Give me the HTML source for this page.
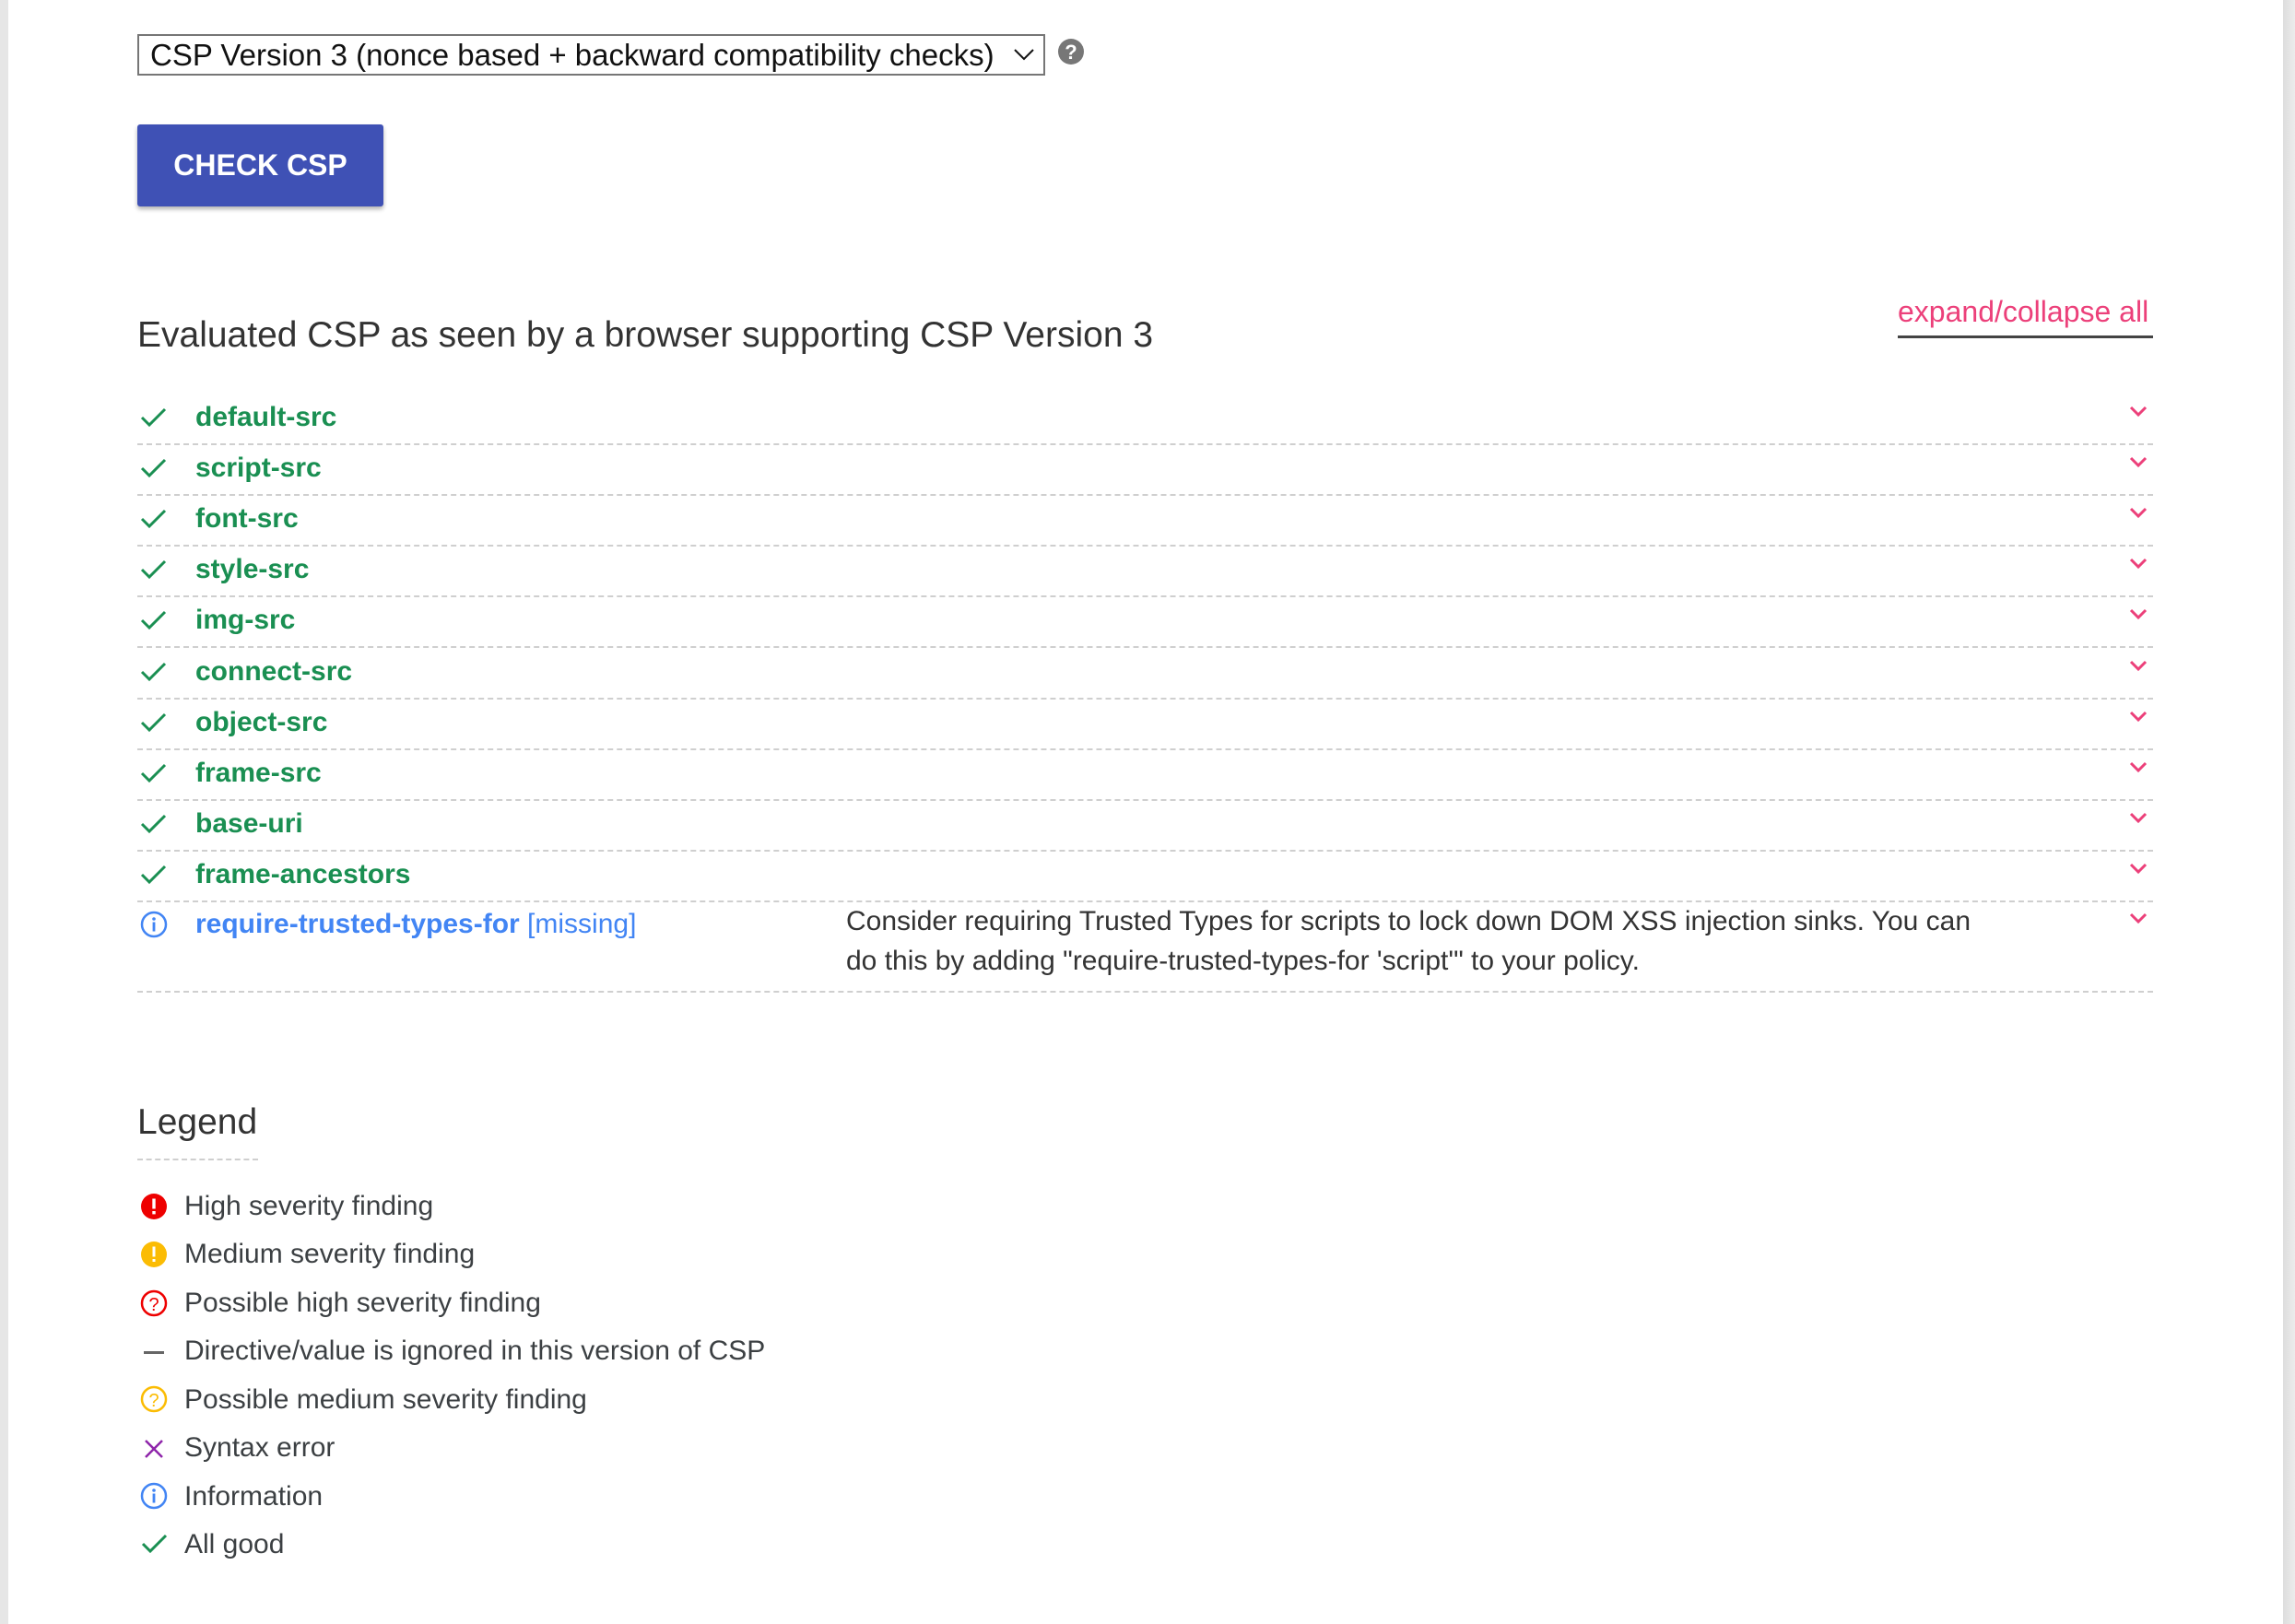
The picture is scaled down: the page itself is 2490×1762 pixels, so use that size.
<!DOCTYPE html>
<html><head><meta charset="utf-8"><style>
html,body{margin:0;padding:0;background:#fff;}
body{width:2490px;height:1762px;position:relative;overflow:hidden;font-family:"Liberation Sans",Arial,sans-serif;color:#3c4043;}
.lb{position:absolute;left:0;top:0;width:9px;height:1762px;background:#e6e6e6;}
.rb{position:absolute;left:2477px;top:0;width:13px;height:1762px;background:linear-gradient(90deg,#ddd,#ececec);}
.a{position:absolute;white-space:nowrap;}
.sel{position:absolute;left:149px;top:37px;width:981px;height:41px;border:2px solid #767676;background:#fff;}
.sel span{position:absolute;left:12px;top:2px;font-size:33px;line-height:37px;color:#111;}
.btn{position:absolute;left:149px;top:135px;width:267px;height:89px;background:#3f51b5;border-radius:3px;box-shadow:0 3px 5px rgba(0,0,0,.3);color:#fff;font-size:32px;font-weight:bold;line-height:89px;text-align:center;}
.row{position:absolute;left:149px;width:2187px;height:55px;}
.sep{position:absolute;left:149px;width:2187px;border-top:2px dashed #cfcfcf;height:0;}
.lbl{position:absolute;left:63px;font-size:30px;font-weight:bold;color:#1a8f52;line-height:40px;top:-20px;}
.leg{position:absolute;left:200px;font-size:30px;line-height:36px;color:#3c4043;}
</style></head><body>
<div class="lb"></div><div class="rb"></div>
<div class="sel"><span>CSP Version 3 (nonce based + backward compatibility checks)</span>
<svg style="position:absolute;left:948px;top:12px" width="24" height="16" viewBox="0 0 24 16"><path d="M2 3 L12 13 L22 3" fill="none" stroke="#111" stroke-width="2"/></svg></div>
<svg style="position:absolute;left:1148px;top:42px" width="28" height="28" viewBox="0 0 28 28"><circle cx="14" cy="14" r="14" fill="#777"/><text x="14" y="22" text-anchor="middle" font-family="Liberation Sans" font-weight="bold" font-size="22" fill="#fff">?</text></svg>
<div class="btn">CHECK CSP</div>
<div class="a" style="left:149px;top:340px;font-size:39px;line-height:48px;color:#333;">Evaluated CSP as seen by a browser supporting CSP Version 3</div>
<div class="a" style="left:2059px;top:318px;font-size:32px;line-height:40px;color:#ec407a;">expand/collapse all</div>
<div class="a" style="left:2059px;top:364px;width:277px;height:3px;background:#444;"></div>

<div id="rows"></div>
<script>
var names=["default-src","script-src","font-src","style-src","img-src","connect-src","object-src","frame-src","base-uri","frame-ancestors"];
var h="";
for(var i=0;i<names.length;i++){
 var cy=453+i*55.1;
 h+='<div class="row" style="top:'+cy+'px"><svg style="position:absolute;left:3px;top:-12px" width="30" height="24" viewBox="0 0 30 24"><path d="M2 12 L10 20 L27 3" fill="none" stroke="#1a8f52" stroke-width="3"/></svg><div class="lbl">'+names[i]+'</div><svg style="position:absolute;left:2161px;top:-14px" width="20" height="14" viewBox="0 0 20 14"><path d="M2 3 L10 11 L18 3" fill="none" stroke="#ec407a" stroke-width="3"/></svg></div>';
 h+='<div class="sep" style="top:'+(481+i*55.1)+'px"></div>';
}
document.getElementById("rows").innerHTML=h;
</script>
<div class="row" style="top:1003px">
<svg style="position:absolute;left:3px;top:-15px" width="30" height="30" viewBox="0 0 30 30"><circle cx="15" cy="15" r="13" fill="none" stroke="#4285f4" stroke-width="2.5"/><circle cx="15" cy="9" r="1.8" fill="#4285f4"/><rect x="13.6" y="12.5" width="2.8" height="10" fill="#4285f4"/></svg>
<div class="a" style="left:63px;top:-20px;font-size:30px;line-height:40px;color:#4285f4;"><b>require-trusted-types-for</b> [missing]</div>
<svg style="position:absolute;left:2161px;top:-14px" width="20" height="14" viewBox="0 0 20 14"><path d="M2 3 L10 11 L18 3" fill="none" stroke="#ec407a" stroke-width="3"/></svg>
</div>
<div class="a" style="left:918px;top:978px;font-size:30px;line-height:43px;color:#333;">Consider requiring Trusted Types for scripts to lock down DOM XSS injection sinks. You can<br>do this by adding "require-trusted-types-for 'script'" to your policy.</div>
<div class="sep" style="top:1075px"></div>

<div class="a" style="left:149px;top:1194px;font-size:39px;line-height:48px;color:#333;">Legend</div>
<div class="a" style="left:149px;top:1257px;width:131px;border-top:2px dashed #cfcfcf;"></div>

<svg style="position:absolute;left:152px;top:1294px" width="30" height="30" viewBox="0 0 30 30"><circle cx="15" cy="15" r="14" fill="#e00"/><rect x="13.3" y="6.5" width="3.4" height="11" fill="#fff"/><rect x="13.3" y="20" width="3.4" height="3.4" fill="#fff"/></svg>
<div class="leg" style="top:1291px">High severity finding</div>
<svg style="position:absolute;left:152px;top:1346px" width="30" height="30" viewBox="0 0 30 30"><circle cx="15" cy="15" r="14" fill="#fbbc04"/><rect x="13.5" y="6.5" width="3" height="11" fill="#fff"/><rect x="13.5" y="20" width="3" height="3" fill="#fff"/></svg>
<div class="leg" style="top:1343px">Medium severity finding</div>
<svg style="position:absolute;left:152px;top:1399px" width="30" height="30" viewBox="0 0 30 30"><circle cx="15" cy="15" r="13" fill="none" stroke="#e00" stroke-width="2.5"/><text x="15" y="23" text-anchor="middle" font-family="Liberation Sans" font-size="20" fill="#e00">?</text></svg>
<div class="leg" style="top:1396px">Possible high severity finding</div>
<div class="a" style="left:156px;top:1466px;width:22px;height:3px;background:#666;"></div>
<div class="leg" style="top:1448px">Directive/value is ignored in this version of CSP</div>
<svg style="position:absolute;left:152px;top:1503px" width="30" height="30" viewBox="0 0 30 30"><circle cx="15" cy="15" r="13" fill="none" stroke="#fbbc04" stroke-width="2.5"/><text x="15" y="23" text-anchor="middle" font-family="Liberation Sans" font-size="20" fill="#fbbc04">?</text></svg>
<div class="leg" style="top:1501px">Possible medium severity finding</div>
<svg style="position:absolute;left:154px;top:1559px" width="26" height="26" viewBox="0 0 26 26"><path d="M4 4 L22 22 M22 4 L4 22" stroke="#8e24aa" stroke-width="2.5"/></svg>
<div class="leg" style="top:1553px">Syntax error</div>
<svg style="position:absolute;left:152px;top:1608px" width="30" height="30" viewBox="0 0 30 30"><circle cx="15" cy="15" r="13" fill="none" stroke="#4285f4" stroke-width="2.5"/><circle cx="15" cy="9" r="1.8" fill="#4285f4"/><rect x="13.6" y="12.5" width="2.8" height="10" fill="#4285f4"/></svg>
<div class="leg" style="top:1606px">Information</div>
<svg style="position:absolute;left:153px;top:1663px" width="30" height="24" viewBox="0 0 30 24"><path d="M2 12 L10 20 L27 3" fill="none" stroke="#1a8f52" stroke-width="3"/></svg>
<div class="leg" style="top:1658px">All good</div>
</body></html>
